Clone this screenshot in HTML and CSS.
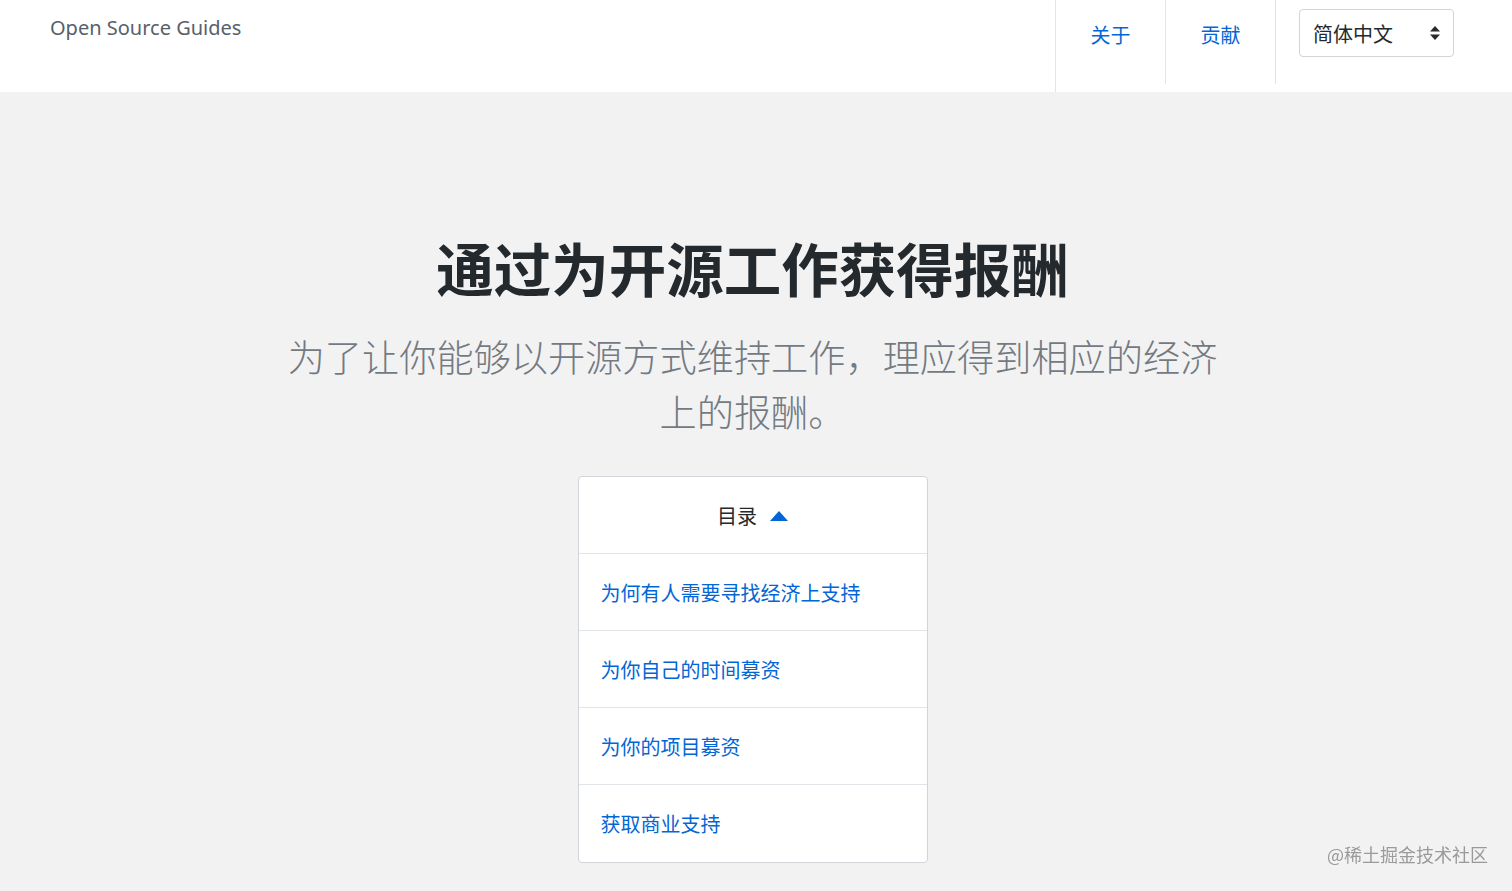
FILE: index.html
```html
<!DOCTYPE html>
<html lang="zh-CN">
<head>
    <meta charset="UTF-8">
    <meta name="viewport" content="width=device-width, initial-scale=1.0">
    <title>通过为开源工作获得报酬 | Open Source Guides</title>
    <link rel="stylesheet" href="styles.css">
</head>
<body>
    <header class="site-header">
        <a class="logo" href="#">Open Source Guides</a>

        <nav class="site-nav">
            <a class="nav-item" href="#">关于</a>
            <a class="nav-item" href="#">贡献</a>
            <div class="lang-select">
                <span>简体中文</span>
                <svg class="lang-arrows" width="10" height="14" viewBox="0 0 10 14">
                    <path d="M5 0 L10 5.5 L0 5.5 Z" fill="#24292e"/>
                    <path d="M5 14 L10 8.5 L0 8.5 Z" fill="#24292e"/>
                </svg>
            </div>
        </nav>
    </header>

    <main class="hero">
        <h1>通过为开源工作获得报酬</h1>
        <p class="lead">为了让你能够以开源方式维持工作，理应得到相应的经济上的报酬。</p>

        <div class="toc">
            <div class="toc-head">
                目录
                <svg class="toc-caret" width="18" height="10" viewBox="0 0 18 10">
                    <path d="M9 0 L18 10 L0 10 Z" fill="#0366d6"/>
                </svg>
            </div>
            <a class="toc-item" href="#">为何有人需要寻找经济上支持</a>
            <a class="toc-item" href="#">为你自己的时间募资</a>
            <a class="toc-item" href="#">为你的项目募资</a>
            <a class="toc-item" href="#">获取商业支持</a>
        </div>
    </main>

    <div class="watermark">@稀土掘金技术社区</div>
</body>
</html>
```

FILE: styles.css
```css
* {
    box-sizing: border-box;
    margin: 0;
    padding: 0;
}

body {
    background-color: #f2f2f2;
    font-family: 'Noto Sans', 'Noto Sans CJK SC', sans-serif;
    color: #24292e;
    min-height: 100vh;
}

a {
    text-decoration: none;
}

/* Header */
.site-header {
    background-color: white;
    height: 92px;
    display: flex;
    justify-content: space-between;
    align-items: flex-start;
}

.logo {
    color: #586069;
    font-size: 20px;
    line-height: 26px;
    padding: 15px 0 0 50px;
}

.site-nav {
    display: flex;
    height: 92px;
    border-left: 1px solid #e1e4e8;
    padding-right: 58px;
}

.nav-item {
    width: 110px;
    height: 84px;
    padding-top: 22px;
    text-align: center;
    font-size: 20px;
    line-height: 26px;
    color: #0366d6;
    font-family: 'Noto Sans CJK SC', sans-serif;
    border-right: 1px solid #e1e4e8;
}

.lang-select {
    margin: 9px 0 0 23px;
    width: 155px;
    height: 48px;
    border: 1px solid #d1d5da;
    border-radius: 4px;
    display: flex;
    align-items: center;
    justify-content: space-between;
    padding: 0 13px 0 13px;
    font-size: 20px;
    font-family: 'Noto Sans CJK SC', sans-serif;
    color: #24292e;
}

/* Hero */
.hero {
    display: flex;
    flex-direction: column;
    align-items: center;
    padding: 140px 7px 28px 0;
    font-family: 'Noto Sans CJK SC', sans-serif;
}

h1 {
    font-size: 57.5px;
    line-height: 71px;
    font-weight: 700;
    color: #24292e;
}

.lead {
    margin-top: 26px;
    max-width: 945px;
    text-align: center;
    font-size: 37.2px;
    line-height: 55px;
    font-weight: 300;
    color: #737a82;
}

.toc {
    margin-top: 37px;
    width: 350px;
    background-color: white;
    border: 1px solid #d1d5da;
    border-radius: 4px;
    display: flex;
    flex-direction: column;
}

.toc-head {
    height: 77px;
    display: flex;
    align-items: center;
    justify-content: center;
    gap: 13px;
    font-size: 20px;
    color: #24292e;
    border-bottom: 1px solid #e1e4e8;
}

.toc-caret {
    margin-top: 2px;
}

.toc-item {
    height: 77px;
    display: flex;
    align-items: center;
    padding-left: 22px;
    font-size: 20px;
    color: #0366d6;
    border-bottom: 1px solid #e1e4e8;
}

.toc-item:last-child {
    border-bottom: none;
}

.watermark {
    position: fixed;
    right: 24px;
    bottom: 24px;
    font-size: 18px;
    color: #9a9a9a;
    font-family: 'Noto Sans CJK SC', sans-serif;
}
```
